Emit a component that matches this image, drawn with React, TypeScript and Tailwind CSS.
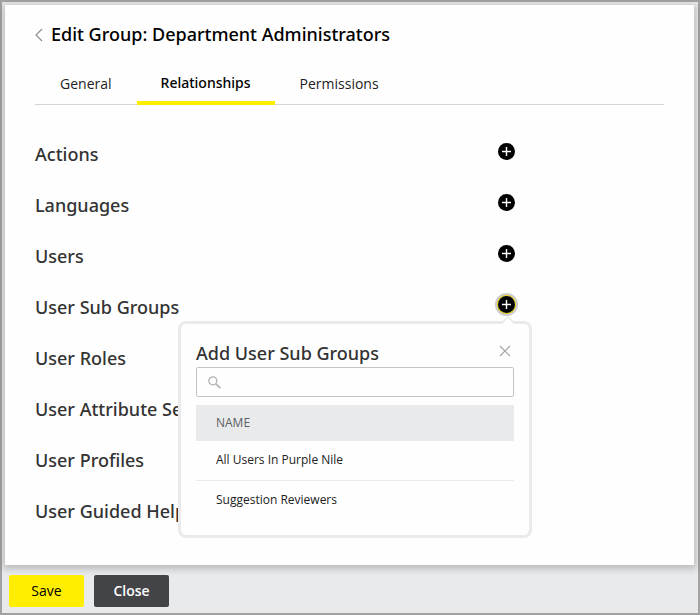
import { useState } from "react"

const tabs = ["General", "Relationships", "Permissions"]

const relationships = [
  "Actions",
  "Languages",
  "Users",
  "User Sub Groups",
  "User Roles",
  "User Attribute Sets",
  "User Profiles",
  "User Guided Help",
]

const subGroups = ["All Users In Purple Nile", "Suggestion Reviewers"]

function PlusIcon() {
  return (
    <svg viewBox="0 0 17 17" className="block h-[17px] w-[17px]" aria-hidden="true">
      <circle cx="8.5" cy="8.5" r="8.5" fill="#000" />
      <path d="M4 8.5h9M8.5 4v9" stroke="#fff" strokeWidth="1.4" />
    </svg>
  )
}

function AddPopover({ title, onClose }: { title: string; onClose: () => void }) {
  const [query, setQuery] = useState("")
  const visible = subGroups.filter((name) => name.toLowerCase().includes(query.toLowerCase()))

  return (
    <div role="dialog" aria-label={`Add ${title}`} className="absolute -right-[17px] top-[25px] z-10 w-[354px] rounded-lg border-3 border-[#e9eaec] bg-[#fefefe] px-[15px] pb-4 pt-4">
      <svg viewBox="0 0 14 9" className="absolute -top-2 right-[14px] h-[9px] w-[14px]" aria-hidden="true">
        <path d="M0 9 7 2l7 7z" fill="#fefefe" />
        <path d="M0 7.5 7 1l7 6.5" fill="none" stroke="#e9eaec" strokeWidth="1.5" />
      </svg>
      <div className="flex items-center justify-between">
        <h2 className="font-['Noto_Sans',sans-serif] text-lg font-medium leading-[27px] text-[#333333]">Add {title}</h2>
        <button type="button" aria-label="Close" onClick={onClose} className="mr-[3px]">
          <svg viewBox="0 0 12 12" className="mb-1.5 block h-3 w-3" aria-hidden="true">
            <path d="M1 1l10 10M11 1 1 11" fill="none" stroke="#a3a5a8" strokeWidth="1.2" />
          </svg>
        </button>
      </div>
      <label className="flex h-[30px] items-center rounded-xs border border-[#c4c4c6] pl-[11px]">
        <svg viewBox="0 0 13 13" className="h-[13px] w-[13px] shrink-0" fill="none" stroke="#b0b2b5" aria-hidden="true">
          <circle cx="4.8" cy="4.8" r="4" strokeWidth="1.3" />
          <path d="M7.8 7.8l4.6 4.4" strokeWidth="1.7" />
        </svg>
        <input type="text" aria-label="Search" value={query} onChange={(event) => setQuery(event.target.value)} className="h-full min-w-0 flex-1 px-2 text-xs outline-none" />
      </label>
      <table className="mt-2 w-full text-left text-xs">
        <thead>
          <tr className="h-9 bg-[#e9eaec] text-[#5c5e62]">
            <th className="px-5 font-normal">NAME</th>
          </tr>
        </thead>
        <tbody>
          {visible.map((name) => (
            <tr key={name} className="h-[39px] border-b border-[#e9eaec] text-[#222222] last:border-0">
              <td className="px-5">{name}</td>
            </tr>
          ))}
        </tbody>
      </table>
    </div>
  )
}

export default function App() {
  const [activeTab, setActiveTab] = useState("Relationships")
  const [openItem, setOpenItem] = useState("User Sub Groups")

  return (
    <div className="flex min-h-screen flex-col border-2 border-[#a2a2a2] bg-[#e9eaec] p-[3px] font-['Open_Sans',sans-serif]">
      <main className="mr-px flex-1 bg-[#fefefe] px-[30px] pb-7 pt-4 shadow-[0_2px_7px_2px_rgba(0,0,0,0.2)]">
        <div className="flex items-center gap-2">
          <button type="button" aria-label="Back">
            <svg viewBox="0 0 8 14" className="block h-[14px] w-2" aria-hidden="true">
              <path d="M7 1 1 7l6 6" fill="none" stroke="#8e8e8e" strokeWidth="1.2" />
            </svg>
          </button>
          <h1 className="font-['Noto_Sans',sans-serif] text-lg font-medium leading-[27px] text-black">Edit Group: Department Administrators</h1>
        </div>

        <nav className="mt-4 flex h-[41px] border-b border-[#d4d4d4]">
          {tabs.map((tab) => (
            <button
              key={tab}
              type="button"
              onClick={() => setActiveTab(tab)}
              className={
                tab === activeTab
                  ? "-mb-px border-b-4 border-[#ffee00] px-6 font-['Noto_Sans',sans-serif] text-sm font-medium text-black"
                  : "px-[25px] text-sm text-[#222222]"
              }
            >
              {tab}
            </button>
          ))}
        </nav>

        <ul className="mt-[23px] max-w-[480px]">
          {relationships.map((item) => (
            <li key={item} className="flex h-[51px] items-center justify-between">
              <h2 className="font-['Noto_Sans',sans-serif] text-lg font-medium text-[#333333]">{item}</h2>
              {relationships.indexOf(item) < 4 && (
                <div className="relative mb-1">
                  <button
                    type="button"
                    aria-label={`Add ${item}`}
                    onClick={() => setOpenItem(item === openItem ? "" : item)}
                    className={
                      item === openItem
                        ? "block rounded-full shadow-[0_0_0_1px_#ecd000,0_0_0_3px_#cccccc]"
                        : "block rounded-full"
                    }
                  >
                    <PlusIcon />
                  </button>
                  {item === openItem && <AddPopover title={item} onClose={() => setOpenItem("")} />}
                </div>
              )}
            </li>
          ))}
        </ul>
      </main>

      <footer className="flex gap-[10px] px-1 pb-[3px] pt-[10px] text-sm font-semibold">
        <button type="button" className="h-8 w-[75px] rounded-xs bg-[#ffee00] font-medium text-black">Save</button>
        <button type="button" className="h-8 w-[75px] rounded-xs bg-[#434447] text-white">Close</button>
      </footer>
    </div>
  )
}
